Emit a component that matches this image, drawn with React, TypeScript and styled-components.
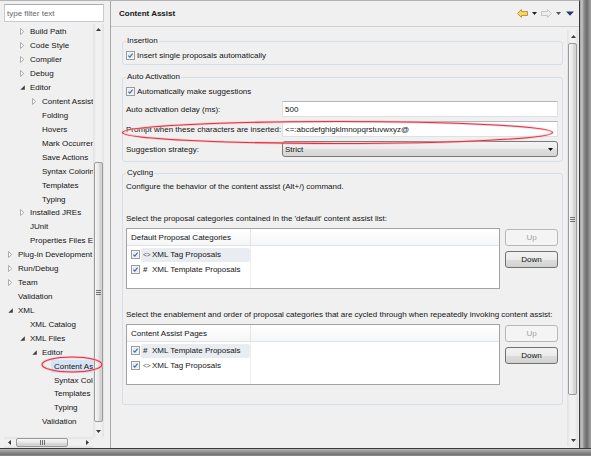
import React from "react";
import styled, { createGlobalStyle } from "styled-components";

const GlobalStyle = createGlobalStyle`
  html, body { margin: 0; padding: 0; background: #f0f0f0; }
  body { font-family: "Liberation Sans", Arial, sans-serif; font-size: 8px; color: #141414; }
  *, *::before, *::after { box-sizing: border-box; }
`;

const Screen = styled.div`
  width: 591px;
  height: 456px;
  overflow: hidden;
  display: flex;
  flex-direction: column;
  background: #f0f0f0;
`;
const Upper = styled.div`
  display: flex;
  height: 448px;
  flex: none;
`;
const Window = styled.div`
  position: relative;
  width: 580px;
  height: 448px;
  flex: none;
  display: flex;
  background: #f0f0f0;
  border-top: 1px solid #b4b4b4;
  border-right: 1px solid #3a3a3a;
`;
const RightShade = styled.div`
  flex: 1;
  background: linear-gradient(to right, #a3a3a3 0, #c6c6c6 2px, #8a8a8a 4px, #6c6c6c 7px, #a6a6a6 11px);
`;
const BottomShade = styled.div`
  flex: 1;
  border-top: 1px solid #3a3a3a;
  background: linear-gradient(#b9b9b9, #8d8d8d 3px, #717171 6px, #9a9a9a);
`;

/* ---------- left pane ---------- */
const LeftPane = styled.div`
  width: 110px;
  flex: none;
  display: flex;
  flex-direction: column;
  padding: 3px 6px 0 4px;
`;
const Filter = styled.div`
  height: 18px;
  flex: none;
  display: flex;
  align-items: center;
  padding-left: 2px;
  background: #fff;
  border: 1px solid #c8ccd2;
  border-top-color: #abadb3;
  color: #666;
`;
const TreeBox = styled.div`
  margin-top: 2px;
  flex: 1;
  min-height: 0;
  display: grid;
  grid-template-columns: 89px 11px;
  grid-template-rows: 1fr 11px;
`;
const TreeView = styled.div`
  overflow: hidden;
  padding-top: 1px;
`;
const TreeRow = styled.div<{ $level: number }>`
  height: 13.93px;
  display: flex;
  align-items: center;
  white-space: nowrap;
  padding-left: ${(p) => 2 + p.$level * 12}px;
`;
const Toggle = styled.span`
  width: 9px;
  flex: none;
  display: flex;
  align-items: center;
  justify-content: center;
`;
const NodeLabel = styled.span<{ $selected?: boolean }>`
  flex: none;
  padding: 0 3px;
  line-height: 13px;
  background: ${(p) => (p.$selected ? "#d3e4f7" : "transparent")};
`;

const VBar = styled.div`
  display: flex;
  flex-direction: column;
  background: linear-gradient(to right, #e2e2e2, #f1f1f1 30%, #f1f1f1 70%, #e2e2e2);
`;
const HBar = styled.div`
  display: flex;
  align-items: stretch;
  background: linear-gradient(#e2e2e2, #f1f1f1 30%, #f1f1f1 70%, #e2e2e2);
`;
const Corner = styled.div`
  background: #f0f0f0;
`;
const Arrow = styled.div<{ $size: number }>`
  flex: none;
  ${(p) => `width: ${p.$size}px; min-height: ${p.$size}px;`}
  display: flex;
  align-items: center;
  justify-content: center;
`;
const Track = styled.div<{ $horizontal?: boolean }>`
  flex: 1;
  display: flex;
  flex-direction: ${(p) => (p.$horizontal ? "row" : "column")};
  min-width: 0;
  min-height: 0;
`;
const Thumb = styled.div<{ $offset: number; $length: number; $horizontal?: boolean }>`
  flex: none;
  display: flex;
  align-items: center;
  justify-content: center;
  border: 1px solid #9b9b9b;
  border-radius: 2px;
  ${(p) =>
    p.$horizontal
      ? `margin: 1px 0 1px ${p.$offset}px; width: ${p.$length}px; background: linear-gradient(#f6f6f6, #e7e7e7 50%, #dadada 51%, #d2d2d2);`
      : `margin: ${p.$offset}px 1px 0 1px; height: ${p.$length}px; background: linear-gradient(to right, #f6f6f6, #e7e7e7 50%, #dadada 51%, #d2d2d2);`}
`;
const Grip = styled.div<{ $horizontal?: boolean }>`
  ${(p) =>
    p.$horizontal
      ? `width: 5px; height: 5px; background: repeating-linear-gradient(to right, #6f6f6f 0 1px, transparent 1px 2px);`
      : `width: 5px; height: 5px; background: repeating-linear-gradient(#6f6f6f 0 1px, transparent 1px 2px);`}
`;

/* ---------- right pane ---------- */
const RightPane = styled.div`
  flex: 1;
  min-width: 0;
  display: flex;
  flex-direction: column;
  border-left: 1px solid #a7a7a7;
`;
const Header = styled.div`
  height: 26px;
  flex: none;
  display: flex;
  align-items: center;
  padding: 0 3px 0 8px;
  border-bottom: 1px solid #cfcfcf;
`;
const Title = styled.div`
  flex: 1;
  font-weight: bold;
`;
const Tool = styled.span`
  width: 12px;
  height: 12px;
  display: flex;
  align-items: center;
  justify-content: center;
`;
const Body = styled.div`
  flex: 1;
  min-height: 0;
  display: flex;
`;
const Content = styled.div`
  flex: 1;
  min-width: 0;
  padding: 9px 4px 0 11px;
`;
const RScroll = styled(VBar)`
  width: 11px;
  flex: none;
  margin: 3px 1px 1px 0;
`;

const Group = styled.fieldset<{ $mt?: number; $pb?: number }>`
  margin: ${(p) => p.$mt ?? 0}px 0 0 0;
  padding: 0 4px ${(p) => p.$pb ?? 5}px 3px;
  border: 1px solid #d5dfe5;
  border-radius: 3px;
  min-width: 0;
`;
const GroupTitle = styled.legend`
  padding: 0 1px;
  line-height: 10px;
  font-size: 8px;
`;
const CheckRow = styled.div`
  margin-top: 3px;
  height: 12px;
  display: flex;
  align-items: center;
  gap: 2px;
  white-space: nowrap;
`;
const CheckSvg = styled.svg`
  flex: none;
  display: block;
`;
const FormGrid = styled.div`
  margin-top: 4px;
  display: grid;
  grid-template-columns: 156px 1fr;
  row-gap: 4px;
  align-items: center;
`;
const FieldLabel = styled.span`
  white-space: nowrap;
`;
const TextField = styled.div`
  height: 16px;
  display: flex;
  align-items: center;
  padding-left: 2px;
  background: #fff;
  border: 1px solid #dde1e6;
  border-top-color: #b3b6bc;
  white-space: nowrap;
`;
const SelectBox = styled.div`
  height: 16px;
  display: flex;
  align-items: center;
  padding: 0 4px 0 2px;
  border: 1px solid #7a7a7a;
  border-radius: 3px;
  background: linear-gradient(#f4f4f4, #ececec 50%, #dfdfdf 51%, #d6d6d6);
`;
const SelectValue = styled.span`
  flex: 1;
`;
const Note = styled.div<{ $mt: number }>`
  margin-top: ${(p) => p.$mt}px;
  line-height: 10px;
  white-space: nowrap;
`;
const ListRow = styled.div`
  margin-top: 4px;
  display: flex;
  align-items: flex-start;
`;
const Table = styled.div`
  width: 374px;
  height: 61px;
  flex: none;
  display: flex;
  flex-direction: column;
  background: #fff;
  border: 1px solid #a3a3a3;
`;
const TableHead = styled.div`
  height: 17px;
  flex: none;
  display: flex;
  border-bottom: 1px solid #e2e2e2;
  background: linear-gradient(#ffffff, #f5f6f8);
`;
const HeadCell = styled.div<{ $first?: boolean }>`
  ${(p) => (p.$first ? "width: 124px; border-right: 1px solid #e3e5e8;" : "flex: 1;")}
  display: flex;
  align-items: center;
  padding-left: 4px;
  white-space: nowrap;
`;
const TableBody = styled.div`
  flex: 1;
  display: flex;
`;
const FirstCol = styled.div`
  width: 124px;
  flex: none;
  padding-top: 1px;
  border-right: 1px solid #efefef;
`;
const ListItem = styled.div`
  height: 15px;
  display: flex;
  align-items: center;
  padding-left: 4px;
  gap: 1px;
`;
const ItemBody = styled.div<{ $hot?: boolean }>`
  flex: 1;
  height: 14px;
  display: flex;
  align-items: center;
  padding-left: 2px;
  border-radius: 2px;
  white-space: nowrap;
  background: ${(p) => (p.$hot ? "#e9ecf0" : "transparent")};
`;
const ItemIcon = styled.span<{ $kind: "tag" | "hash" }>`
  width: 9px;
  flex: none;
  ${(p) =>
    p.$kind === "tag"
      ? "font-size: 7px; color: #555; letter-spacing: -0.5px;"
      : "font-size: 8px; font-weight: bold; color: #3a3a3a;"}
`;
const ButtonCol = styled.div`
  margin: 1px 0 0 5px;
  width: 53px;
  flex: none;
  display: flex;
  flex-direction: column;
  gap: 5px;
`;
const PushButton = styled.button`
  height: 17px;
  padding: 0;
  font: inherit;
  color: #141414;
  border: 1px solid #707070;
  border-radius: 3px;
  background: linear-gradient(#f3f3f3, #ebebeb 50%, #dddddd 51%, #d2d2d2);
  &:disabled {
    color: #a3a3a3;
    border-color: #b5b9bc;
    background: #f4f4f4;
  }
`;

const Annotation = styled.svg<{ $x: number; $y: number }>`
  position: absolute;
  left: ${(p) => p.$x}px;
  top: ${(p) => p.$y}px;
  overflow: visible;
  pointer-events: none;
`;

/* ---------- small drawings ---------- */
function Check() {
  return (
    <CheckSvg width="9" height="9" viewBox="0 0 9 9">
      <rect x="0.5" y="0.5" width="8" height="8" fill="#fbfbfb" stroke="#9a9b9c" />
      <rect x="1.5" y="1.5" width="6" height="6" fill="#e6ecf5" />
      <path d="M2.4 4.6 L3.8 6.1 L6.6 2.6" fill="none" stroke="#4a64a6" strokeWidth="1.05" />
    </CheckSvg>
  );
}

function Tri({ dir, color = "#3c3c3c" }: { dir: "up" | "down" | "left" | "right"; color?: string }) {
  const pts = {
    up: "0,3 2.5,0 5,3",
    down: "0,0 5,0 2.5,3",
    left: "3,0 3,5 0,2.5",
    right: "0,0 0,5 3,2.5",
  }[dir];
  const w = dir === "up" || dir === "down" ? 5 : 3;
  const h = dir === "up" || dir === "down" ? 3 : 5;
  return (
    <svg width={w} height={h} viewBox={`0 0 ${w} ${h}`}>
      <polygon points={pts} fill={color} />
    </svg>
  );
}

function Collapsed() {
  return (
    <svg width="5" height="7" viewBox="0 0 5 7">
      <polygon points="0.5,0.5 3.8,3.5 0.5,6.5" fill="#fff" stroke="#a4a4a4" strokeWidth="0.9" />
    </svg>
  );
}
function Expanded() {
  return (
    <svg width="5" height="5" viewBox="0 0 5 5">
      <polygon points="4.8,0.3 4.8,4.8 0.3,4.8" fill="#3f3f3f" />
    </svg>
  );
}

function NavArrow({ back }: { back?: boolean }) {
  return (
    <svg width="11" height="9" viewBox="0 0 11 9">
      <polygon
        points={back ? "0.5,4.5 4.5,0.5 4.5,2.5 10.5,2.5 10.5,6.5 4.5,6.5 4.5,8.5" : "10.5,4.5 6.5,0.5 6.5,2.5 0.5,2.5 0.5,6.5 6.5,6.5 6.5,8.5"}
        fill={back ? "#f6d46e" : "#ededed"}
        stroke={back ? "#c8952a" : "#c6c6c6"}
      />
    </svg>
  );
}

function MenuIcon() {
  return (
    <svg width="8" height="5" viewBox="0 0 8 5">
      <polygon points="0,0.5 8,0.5 4,4.8" fill="#2c3670" />
    </svg>
  );
}

/* ---------- data ---------- */
type Node = { level: number; toggle: "" | "c" | "e"; label: string; selected?: boolean };
const tree: Node[] = [
  { level: 1, toggle: "c", label: "Build Path" },
  { level: 1, toggle: "c", label: "Code Style" },
  { level: 1, toggle: "c", label: "Compiler" },
  { level: 1, toggle: "c", label: "Debug" },
  { level: 1, toggle: "e", label: "Editor" },
  { level: 2, toggle: "c", label: "Content Assist" },
  { level: 2, toggle: "", label: "Folding" },
  { level: 2, toggle: "", label: "Hovers" },
  { level: 2, toggle: "", label: "Mark Occurrences" },
  { level: 2, toggle: "", label: "Save Actions" },
  { level: 2, toggle: "", label: "Syntax Coloring" },
  { level: 2, toggle: "", label: "Templates" },
  { level: 2, toggle: "", label: "Typing" },
  { level: 1, toggle: "c", label: "Installed JREs" },
  { level: 1, toggle: "", label: "JUnit" },
  { level: 1, toggle: "", label: "Properties Files Editor" },
  { level: 0, toggle: "c", label: "Plug-in Development" },
  { level: 0, toggle: "c", label: "Run/Debug" },
  { level: 0, toggle: "c", label: "Team" },
  { level: 0, toggle: "", label: "Validation" },
  { level: 0, toggle: "e", label: "XML" },
  { level: 1, toggle: "", label: "XML Catalog" },
  { level: 1, toggle: "e", label: "XML Files" },
  { level: 2, toggle: "e", label: "Editor" },
  { level: 3, toggle: "", label: "Content Assist", selected: true },
  { level: 3, toggle: "", label: "Syntax Coloring" },
  { level: 3, toggle: "", label: "Templates" },
  { level: 3, toggle: "", label: "Typing" },
  { level: 2, toggle: "", label: "Validation" },
];

type Item = { kind: "tag" | "hash"; label: string; hot?: boolean };

function ProposalTable({ heading, items }: { heading: string; items: Item[] }) {
  return (
    <ListRow>
      <Table>
        <TableHead>
          <HeadCell $first>{heading}</HeadCell>
          <HeadCell />
        </TableHead>
        <TableBody>
          <FirstCol>
            {items.map((it) => (
              <ListItem key={it.label}>
                <Check />
                <ItemBody $hot={it.hot}>
                  <ItemIcon $kind={it.kind}>{it.kind === "tag" ? "<>" : "#"}</ItemIcon>
                  {it.label}
                </ItemBody>
              </ListItem>
            ))}
          </FirstCol>
        </TableBody>
      </Table>
      <ButtonCol>
        <PushButton disabled>Up</PushButton>
        <PushButton>Down</PushButton>
      </ButtonCol>
    </ListRow>
  );
}

export default function App() {
  return (
    <>
      <GlobalStyle />
      <Screen>
        <Upper>
          <Window>
            <LeftPane>
              <Filter>type filter text</Filter>
              <TreeBox>
                <TreeView>
                  {tree.map((n, i) => (
                    <TreeRow key={i} $level={n.level}>
                      <Toggle>{n.toggle === "c" ? <Collapsed /> : n.toggle === "e" ? <Expanded /> : null}</Toggle>
                      <NodeLabel $selected={n.selected}>{n.label}</NodeLabel>
                    </TreeRow>
                  ))}
                </TreeView>
                <VBar>
                  <Arrow $size={11}>
                    <Tri dir="up" />
                  </Arrow>
                  <Track>
                    <Thumb $offset={127} $length={260}>
                      <Grip />
                    </Thumb>
                  </Track>
                  <Arrow $size={11}>
                    <Tri dir="down" />
                  </Arrow>
                </VBar>
                <HBar>
                  <Arrow $size={11}>
                    <Tri dir="left" />
                  </Arrow>
                  <Track $horizontal>
                    <Thumb $horizontal $offset={1} $length={52}>
                      <Grip $horizontal />
                    </Thumb>
                  </Track>
                  <Arrow $size={11}>
                    <Tri dir="right" />
                  </Arrow>
                </HBar>
                <Corner />
              </TreeBox>
            </LeftPane>

            <RightPane>
              <Header>
                <Title>Content Assist</Title>
                <Tool>
                  <NavArrow back />
                </Tool>
                <Tool>
                  <Tri dir="down" color="#222" />
                </Tool>
                <Tool>
                  <NavArrow />
                </Tool>
                <Tool>
                  <Tri dir="down" color="#555" />
                </Tool>
                <Tool>
                  <MenuIcon />
                </Tool>
              </Header>
              <Body>
                <Content>
                  <Group $pb={3}>
                    <GroupTitle>Insertion</GroupTitle>
                    <CheckRow>
                      <Check />
                      Insert single proposals automatically
                    </CheckRow>
                  </Group>

                  <Group $mt={7} $pb={4}>
                    <GroupTitle>Auto Activation</GroupTitle>
                    <CheckRow>
                      <Check />
                      Automatically make suggestions
                    </CheckRow>
                    <FormGrid>
                      <FieldLabel>Auto activation delay (ms):</FieldLabel>
                      <TextField>500</TextField>
                      <FieldLabel>Prompt when these characters are inserted:</FieldLabel>
                      <TextField>{"<=:abcdefghigklmnopqrstuvwxyz@"}</TextField>
                      <FieldLabel>Suggestion strategy:</FieldLabel>
                      <SelectBox>
                        <SelectValue>Strict</SelectValue>
                        <Tri dir="down" color="#111" />
                      </SelectBox>
                    </FormGrid>
                  </Group>

                  <Group $mt={6} $pb={19}>
                    <GroupTitle>Cycling</GroupTitle>
                    <Note $mt={4}>Configure the behavior of the content assist (Alt+/) command.</Note>
                    <Note $mt={22}>Select the proposal categories contained in the 'default' content assist list:</Note>
                    <ProposalTable
                      heading="Default Proposal Categories"
                      items={[
                        { kind: "tag", label: "XML Tag Proposals", hot: true },
                        { kind: "hash", label: "XML Template Proposals" },
                      ]}
                    />
                    <Note $mt={21}>
                      Select the enablement and order of proposal categories that are cycled through when repeatedly invoking content assist:
                    </Note>
                    <ProposalTable
                      heading="Content Assist Pages"
                      items={[
                        { kind: "hash", label: "XML Template Proposals", hot: true },
                        { kind: "tag", label: "XML Tag Proposals" },
                      ]}
                    />
                  </Group>
                </Content>
                <RScroll>
                  <Arrow $size={13}>
                    <Tri dir="up" />
                  </Arrow>
                  <Track>
                    <Thumb $offset={0} $length={352}>
                      <Grip />
                    </Thumb>
                  </Track>
                  <Arrow $size={13}>
                    <Tri dir="down" />
                  </Arrow>
                </RScroll>
              </Body>
            </RightPane>

            <Annotation $x={121} $y={119} width="433" height="25" viewBox="0 0 433 25">
              <ellipse cx="216.5" cy="12.5" rx="215" ry="11" fill="none" stroke="#f5b3ba" strokeWidth="2.6" opacity="0.6" />
              <ellipse cx="216.5" cy="12.5" rx="215" ry="11" fill="none" stroke="#e3303f" strokeWidth="1.1" />
            </Annotation>
            <Annotation $x={41} $y={355} width="62" height="17" viewBox="0 0 62 17">
              <ellipse cx="31" cy="8.5" rx="30" ry="7.5" fill="none" stroke="#f5b3ba" strokeWidth="2.6" opacity="0.6" />
              <ellipse cx="31" cy="8.5" rx="30" ry="7.5" fill="none" stroke="#e3303f" strokeWidth="1.1" />
            </Annotation>
          </Window>
          <RightShade />
        </Upper>
        <BottomShade />
      </Screen>
    </>
  );
}
